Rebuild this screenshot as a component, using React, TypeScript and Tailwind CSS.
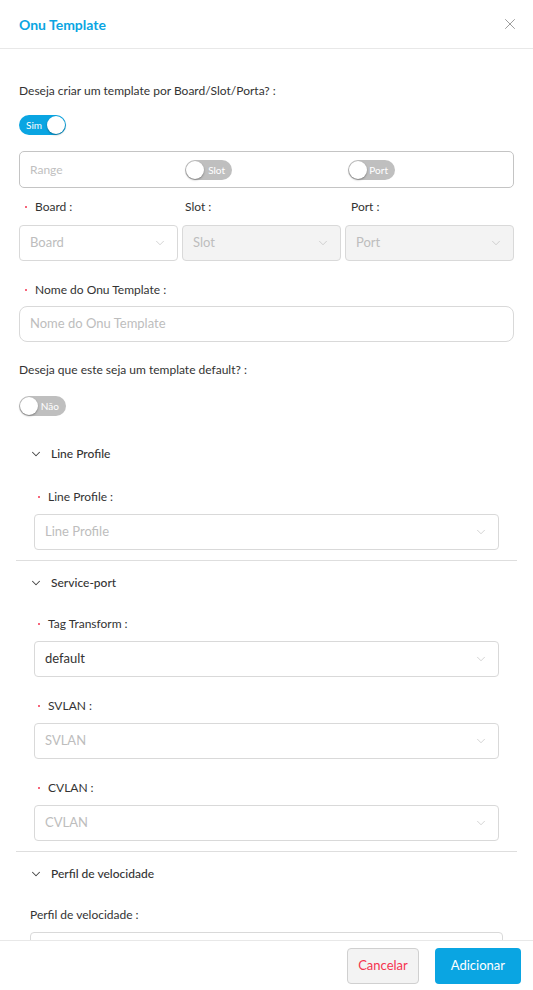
import { X, ChevronDown } from "lucide-react";

const BLUE = "#0aa5e2";

function Toggle({ on, label }: { on?: boolean; label: string }) {
  return (
    <div
      className={`relative flex h-[20px] w-[47px] items-center rounded-full ${
        on ? "bg-[#0aa5e2] justify-start pl-[7px]" : "bg-[#bfbfbf] justify-end pr-[7px]"
      }`}
    >
      <span className="text-[10px] leading-none text-white">{label}</span>
      <span
        className={`absolute top-[1px] h-[18px] w-[18px] rounded-full bg-white shadow-[0_1px_2px_rgba(0,0,0,0.35)] ${
          on ? "right-[1px]" : "left-[1px]"
        }`}
      />
    </div>
  );
}

function Req() {
  return <span className="mr-[8px] inline-block h-[2px] w-[2px] rounded-full bg-[#f5334f]" />;
}

function Label({ text, req = true }: { text: string; req?: boolean }) {
  return (
    <div className="flex items-center text-[12px] leading-none text-[#333]">
      {req && <Req />}
      <span>{text}</span>
      <span className="ml-[3px]">:</span>
    </div>
  );
}

function Select({
  placeholder,
  value,
  disabled,
}: {
  placeholder?: string;
  value?: string;
  disabled?: boolean;
}) {
  return (
    <div
      className={`flex h-[36px] items-center justify-between rounded-[4px] border border-[#d9d9d9] px-[10px] ${
        disabled ? "bg-[#f3f3f3]" : "bg-white"
      }`}
    >
      <span className={`text-[13px] ${value ? "text-[#333]" : "text-[#bdbdbd]"}`}>
        {value ?? placeholder}
      </span>
      <ChevronDown size={14} strokeWidth={1} color="#b5b5b5" />
    </div>
  );
}

function Section({ title }: { title: string }) {
  return (
    <div className="flex h-[44px] items-center pl-[13px]">
      <ChevronDown size={14} strokeWidth={1.8} color="#444" />
      <span className="ml-[8px] text-[12px] font-medium text-[#333]">{title}</span>
    </div>
  );
}

export default function App() {
  return (
    <div
      className="flex h-[990px] w-[533px] flex-col overflow-hidden bg-white"
      style={{ fontFamily: "Lato, 'Noto Sans', sans-serif" }}
    >
      {/* Header */}
      <div className="flex h-[49px] shrink-0 items-center justify-between border-b border-[#e8e8e8] pl-[19px] pr-[14px]">
        <h1 className="text-[14px] font-bold" style={{ color: BLUE }}>
          Onu Template
        </h1>
        <X size={18} strokeWidth={1.1} color="#888" />
      </div>

      {/* Body */}
      <div className="flex-1 overflow-hidden">
        <div className="px-[19px] pt-[33px]">
          <div className="text-[12px] text-[#333]">Deseja criar um template por Board/Slot/Porta? :</div>

          <div className="mt-[15px]">
            <Toggle on label="Sim" />
          </div>

          <div className="mt-[16px] grid h-[37px] grid-cols-[159px_159px_1fr] items-center gap-[4px] rounded-[5px] border border-[#c4c4c4]">
            <span className="pl-[10px] text-[12px] text-[#c0c0c0]">Range</span>
            <div className="pl-[2px]">
              <Toggle label="Slot" />
            </div>
            <div className="pl-[2px]">
              <Toggle label="Port" />
            </div>
          </div>

          <div className="mt-[13px] grid grid-cols-[159px_159px_1fr] gap-x-[4px]">
            <div className="pl-[6px]">
              <Label text="Board" />
            </div>
            <div className="pl-[3px]">
              <Label text="Slot" req={false} />
            </div>
            <div className="pl-[6px]">
              <Label text="Port" req={false} />
            </div>
            <div className="col-span-3 h-[12px]" />
            <Select placeholder="Board" />
            <Select placeholder="Slot" disabled />
            <Select placeholder="Port" disabled />
          </div>

          <div className="mt-[23px] pl-[6px]">
            <Label text="Nome do Onu Template" />
          </div>
          <div className="mt-[10px] flex h-[36px] items-center rounded-[8px] border border-[#d9d9d9] px-[10px] text-[13px] text-[#bdbdbd]">
            Nome do Onu Template
          </div>

          <div className="mt-[19px] text-[12px] text-[#333]">Deseja que este seja um template default? :</div>
          <div className="mt-[17px]">
            <Toggle label="Não" />
          </div>
        </div>

        <div className="mt-[16px] px-[16px]">
          <Section title="Line Profile" />
          <div className="px-[18px] pb-[10px] pt-[15px]">
            <div className="pl-[4px]">
              <Label text="Line Profile" />
            </div>
            <div className="mt-[11px]">
              <Select placeholder="Line Profile" />
            </div>
          </div>
          <div className="border-t border-[#dedede]" />

          <Section title="Service-port" />
          <div className="px-[18px] pb-[10px] pt-[13px]">
            <div className="pl-[4px]">
              <Label text="Tag Transform" />
            </div>
            <div className="mt-[11px]">
              <Select value="default" />
            </div>
            <div className="mt-[23px] pl-[4px]">
              <Label text="SVLAN" />
            </div>
            <div className="mt-[11px]">
              <Select placeholder="SVLAN" />
            </div>
            <div className="mt-[23px] pl-[4px]">
              <Label text="CVLAN" />
            </div>
            <div className="mt-[11px]">
              <Select placeholder="CVLAN" />
            </div>
          </div>
          <div className="border-t border-[#dedede]" />

          <Section title="Perfil de velocidade" />
          <div className="px-[14px] pt-[13px]">
            <Label text="Perfil de velocidade" req={false} />
            <div className="mt-[11px]">
              <Select placeholder="" />
            </div>
          </div>
        </div>
      </div>

      {/* Footer */}
      <div className="flex h-[50px] shrink-0 items-center justify-end gap-[16px] border-t border-[#e8e8e8] pr-[12px]">
        <button className="h-[36px] rounded-[4px] border border-[#d0d0d0] bg-[#f3f3f3] px-[10px] text-[13px] text-[#f5334f]">
          Cancelar
        </button>
        <button className="h-[36px] rounded-[4px] px-[16px] text-[13px] text-white" style={{ backgroundColor: BLUE }}>
          Adicionar
        </button>
      </div>
    </div>
  );
}
